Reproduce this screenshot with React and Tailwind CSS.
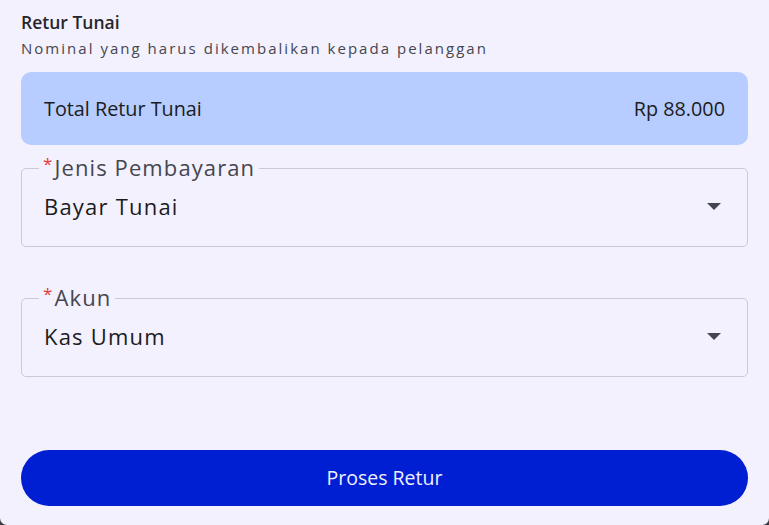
const Caret = () => (
  <svg width="14" height="7" viewBox="0 0 14 7" className="text-[#44464f]">
    <path d="M0 0H14L7 7Z" fill="currentColor" />
  </svg>
);

const SelectField = ({ label, value }) => (
  <fieldset className="rounded-[5px] border-[1.5px] border-[#cbcad1] pl-[17px] pr-[26px] pb-[27px]">
    <legend className="px-[4px] text-[22px] leading-[26px] tracking-[0.05em] text-[#46464f]">
      <span className="relative -top-[6px] mr-[1px] text-[17px] text-[#e53935]">*</span>
      {label}
    </legend>
    <div className="mt-[10px] flex items-center justify-between pl-[5px]">
      <span className="text-[22px] leading-[26px] tracking-[0.055em] text-[#1c1b22]">{value}</span>
      <Caret />
    </div>
  </fieldset>
);

export default function App() {
  return (
    <div className="h-[525px] w-[769px] bg-[#3a3a3f]" style={{ fontFamily: '"Open Sans", "Noto Sans", sans-serif' }}>
      <div className="flex h-full flex-col rounded-b-[7px] bg-[#f3f1fd] px-[21px] pt-[10px]">
        <h2 className="text-[17.5px] font-semibold leading-[24px] text-[#26262c]">Retur Tunai</h2>
        <p className="mt-[4px] text-[15px] leading-[20px] tracking-[0.135em] text-[#45464f]">
          Nominal yang harus dikembalikan kepada pelanggan
        </p>
        <div className="mt-[14px] flex h-[73px] items-center justify-between rounded-[10px] bg-[#b7cdff] px-[23px] text-[19.8px] text-[#1b1b21]">
          <span>Total Retur Tunai</span>
          <span>Rp 88.000</span>
        </div>
        <div className="mt-[9px]">
          <SelectField label="Jenis Pembayaran" value="Bayar Tunai" />
        </div>
        <div className="mt-[37px]">
          <SelectField label="Akun" value="Kas Umum" />
        </div>
        <button className="mt-[73px] h-[56px] w-full rounded-full bg-[#001ed2] text-[19.5px] text-[#eef0ff]">
          Proses Retur
        </button>
      </div>
    </div>
  );
}
